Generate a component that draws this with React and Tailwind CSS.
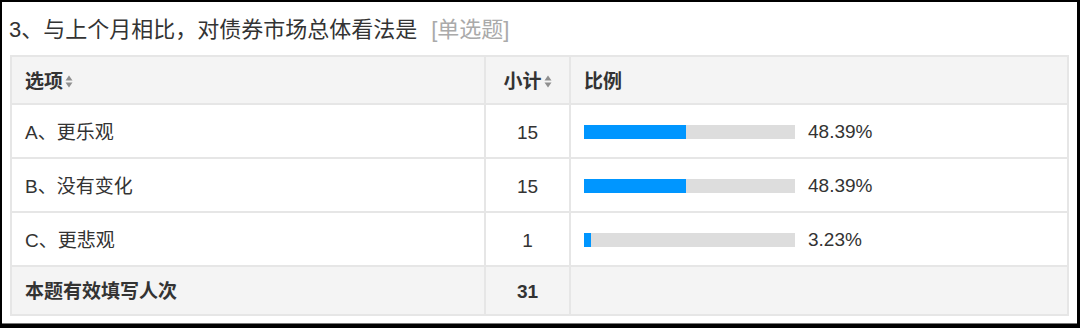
import React from "react";

const font = { fontFamily: '"Liberation Sans", "Noto Sans CJK SC", sans-serif' };

function SortIcon() {
  return (
    <svg width="8" height="13" viewBox="0 0 8 13" className="ml-[2px] inline-block">
      <path d="M4 0.5 L7.5 5.5 L0.5 5.5 Z" fill="#8f8f8f" />
      <path d="M4 12.5 L7.5 7.5 L0.5 7.5 Z" fill="#8f8f8f" />
    </svg>
  );
}

const rows = [
  { label: "A、更乐观", count: 15, pct: 48.39 },
  { label: "B、没有变化", count: 15, pct: 48.39 },
  { label: "C、更悲观", count: 1, pct: 3.23 },
];

export default function App() {
  return (
    <div className="w-[1080px] h-[328px] bg-black pt-[2px] pl-[2px] pr-[3px] pb-[4px]" style={font}>
      <div className="w-full h-full bg-white border-b border-[#777] flex flex-col px-[8px]">
        <div className="h-[53px] flex items-center -ml-[1px] text-[22px] text-[#333] leading-none pt-[2px]">
          <span>3、与上个月相比，对债券市场总体看法是</span>
          <span className="ml-[14px] text-[#aaa]">[单选题]</span>
        </div>
        <div className="border-2 border-[#e6e6e6] text-[19px] text-[#333] leading-none">
          <div className="grid grid-cols-[474px_85px_1fr] h-[48px] bg-[#f4f4f4] border-b-2 border-[#e6e6e6] font-bold">
            <div className="border-r-2 border-[#e6e6e6] flex items-center pl-[13px] pt-[2px]">
              选项<SortIcon />
            </div>
            <div className="border-r-2 border-[#e6e6e6] flex items-center justify-center pt-[2px]">
              小计<SortIcon />
            </div>
            <div className="flex items-center pl-[13px] pt-[2px]">比例</div>
          </div>
          {rows.map((r) => (
            <div key={r.label} className="grid grid-cols-[474px_85px_1fr] h-[54px] bg-white border-b-2 border-[#e6e6e6]">
              <div className="border-r-2 border-[#e6e6e6] flex items-center pl-[13px] pt-[3px]">{r.label}</div>
              <div className="border-r-2 border-[#e6e6e6] flex items-center justify-center pt-[2px]">{r.count}</div>
              <div className="flex items-center pl-[13px] pt-[1px]">
                <div className="w-[211px] h-[14px] bg-[#dddddd]">
                  <div className="h-full bg-[#0096ff]" style={{ width: `${r.pct}%` }} />
                </div>
                <span className="ml-[13px]">{r.pct.toFixed(2)}%</span>
              </div>
            </div>
          ))}
          <div className="grid grid-cols-[474px_85px_1fr] h-[47px] bg-[#f4f4f4] font-bold">
            <div className="border-r-2 border-[#e6e6e6] flex items-center pl-[13px] pt-[2px]">本题有效填写人次</div>
            <div className="border-r-2 border-[#e6e6e6] flex items-center justify-center pt-[2px]">31</div>
            <div />
          </div>
        </div>
      </div>
    </div>
  );
}
